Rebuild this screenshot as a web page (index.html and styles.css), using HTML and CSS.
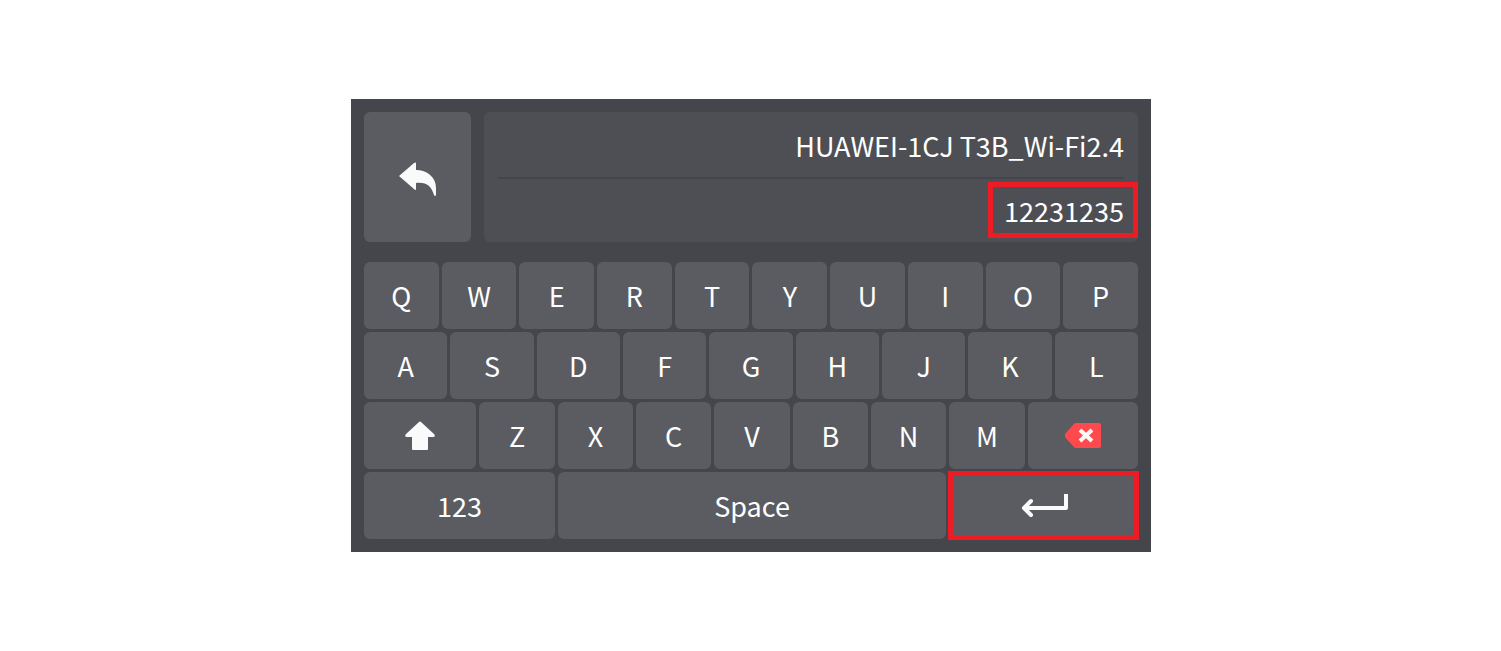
FILE: index.html
```
<!DOCTYPE html>
<html lang="en">
<head>
<meta charset="utf-8">
<meta name="viewport" content="width=device-width, initial-scale=1">
<title>Wi-Fi password</title>
<link rel="stylesheet" href="styles.css">
</head>
<body>
<main class="panel">
  <header class="top">
    <button class="key back" type="button" aria-label="Back">
      <svg width="38" height="34" viewBox="0 0 38 34"><path fill="#fafafa" d="M0 14 L15 1 Q17 0 17 1 V8 C28 8 37 15 37 26 V33 Q36 35 35 33 C32 24 28 20 17 21 V27 Q17 29 15 27 Z"/></svg>
    </button>
    <div class="field">
      <label class="network" for="password">HUAWEI-1CJ T3B_Wi-Fi2.4</label>
      <input class="password marked" id="password" type="text" value="12231235">
    </div>
  </header>
  <div class="keyboard">
    <div class="row">
      <button class="key" type="button">Q</button>
      <button class="key" type="button">W</button>
      <button class="key" type="button">E</button>
      <button class="key" type="button">R</button>
      <button class="key" type="button">T</button>
      <button class="key" type="button">Y</button>
      <button class="key" type="button">U</button>
      <button class="key" type="button">I</button>
      <button class="key" type="button">O</button>
      <button class="key" type="button">P</button>
    </div>
    <div class="row">
      <button class="key" type="button">A</button>
      <button class="key" type="button">S</button>
      <button class="key" type="button">D</button>
      <button class="key" type="button">F</button>
      <button class="key" type="button">G</button>
      <button class="key" type="button">H</button>
      <button class="key" type="button">J</button>
      <button class="key" type="button">K</button>
      <button class="key" type="button">L</button>
    </div>
    <div class="row row-shift">
      <button class="key" type="button" aria-label="Shift">
        <svg width="30" height="30" viewBox="0 0 30 30"><path fill="#fafafa" d="M14 1 Q15 0 16 1 L29 13 Q31 16 28 16 H23 V28 Q23 29 22 29 H8 Q7 29 7 28 V16 H2 Q-1 16 1 13 Z"/></svg>
      </button>
      <button class="key" type="button">Z</button>
      <button class="key" type="button">X</button>
      <button class="key" type="button">C</button>
      <button class="key" type="button">V</button>
      <button class="key" type="button">B</button>
      <button class="key" type="button">N</button>
      <button class="key" type="button">M</button>
      <button class="key" type="button" aria-label="Delete">
        <svg width="36" height="25" viewBox="0 0 36 25"><path fill="#ff4a4d" d="M11 0 H34 Q36 0 36 2 V23 Q36 25 34 25 H11 Q9 25 8 23 L0 14 V11 L8 2 Q9 0 11 0 Z"/><path stroke="#fafafa" stroke-width="4" d="M15 7 L27 18 M27 7 L15 18"/></svg>
      </button>
    </div>
    <div class="row row-space">
      <button class="key" type="button">123</button>
      <button class="key" type="button">Space</button>
      <button class="key marked-key" type="button" aria-label="Enter">
        <svg width="48" height="24" viewBox="0 0 48 24"><path fill="none" stroke="#fafafa" stroke-width="4" stroke-linecap="round" stroke-linejoin="round" d="M11 7 L4 14 L11 21"/><path fill="none" stroke="#fafafa" stroke-width="4" stroke-linejoin="round" d="M4 14 H46 V0"/></svg>
      </button>
    </div>
  </div>
</main>
</body>
</html>
```
FILE: styles.css
```
* {
  box-sizing: border-box;
}

body {
  margin: 0;
  padding-left: 1px;
  min-height: 100vh;
  display: flex;
  align-items: center;
  justify-content: center;
  background: #fff;
  color: #fff;
  font: 400 27px/40px "Noto Sans CJK SC", "Noto Sans", sans-serif;
}

.panel {
  width: 100%;
  max-width: 800px;
  padding: 13px;
  display: grid;
  gap: 20px;
  background: #45464b;
}

.top {
  display: flex;
  gap: 13px;
}

.key {
  min-width: 0;
  height: 67px;
  padding: 0;
  display: flex;
  align-items: center;
  justify-content: center;
  border: 0;
  border-radius: 6px;
  background: #5b5c61;
  color: inherit;
  font: inherit;
}

.back {
  width: 107px;
  height: auto;
  padding: 4px 0 0;
}

.field {
  flex: 1;
  min-width: 0;
  display: flex;
  flex-direction: column;
  border-radius: 6px;
  background: #4e4f54;
  text-align: right;
}

.network {
  height: 67px;
  margin: 0 14px;
  padding-top: 14px;
  border-bottom: 2px solid #45464b;
}

.password {
  align-self: flex-end;
  width: 150px;
  height: 56px;
  margin: 3px 0 4px;
  padding: 0 9px;
  background: transparent;
  color: inherit;
  font: inherit;
  text-align: right;
}

.marked {
  border: 5px solid #ed1c24;
}

.marked-key {
  border-radius: 0;
  outline: 5px solid #ed1c24;
  outline-offset: -4px;
}

.keyboard {
  display: grid;
  gap: 3px;
}

.row {
  display: grid;
  grid-auto-flow: column;
  grid-auto-columns: minmax(0, 1fr);
  gap: 3px;
}

.row-shift {
  grid-template-columns: 112fr repeat(7, 75fr) 110fr;
}

.row-space {
  grid-template-columns: 191fr 388fr 189fr;
}
```
